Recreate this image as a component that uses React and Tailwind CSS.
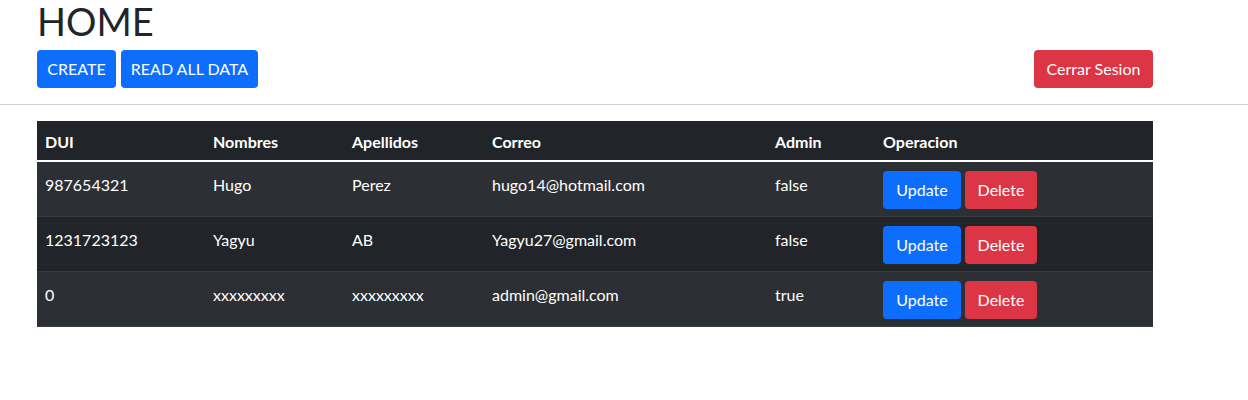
import React from "react";

const USERS = [
  { dui: "987654321", nombres: "Hugo", apellidos: "Perez", correo: "hugo14@hotmail.com", admin: "false" },
  { dui: "1231723123", nombres: "Yagyu", apellidos: "AB", correo: "Yagyu27@gmail.com", admin: "false" },
  { dui: "0", nombres: "xxxxxxxxx", apellidos: "xxxxxxxxx", correo: "admin@gmail.com", admin: "true" },
];

export default function App() {
  return (
    <div className="min-h-screen bg-white text-[#212529] font-['Lato','Noto_Sans',sans-serif] text-[16px]">
      <div className="pl-[37px] w-[1153px]">
        <h1 className="text-[38px] leading-[42px] font-normal h-[50px]">HOME</h1>
        <div className="flex items-center justify-between h-[38px]">
          <div className="flex gap-[5px]">
            <button className="h-[38px] w-[79px] rounded-[4px] bg-[#0d6efd] text-white">CREATE</button>
            <button className="h-[38px] w-[137px] rounded-[4px] bg-[#0d6efd] text-white">READ ALL DATA</button>
          </div>
          <button className="h-[38px] w-[119px] rounded-[4px] bg-[#dc3545] text-white">Cerrar Sesion</button>
        </div>
      </div>
      <hr className="mt-[16px] border-t border-[#cfcfcf]" />
      <div className="pl-[37px] pt-[16px]">
        <table className="w-[1116px] border-collapse text-white text-left">
          <thead>
            <tr className="bg-[#212529] h-[40px] border-b-2 border-white">
              <th className="w-[168px] px-2 pt-[3px] font-bold">DUI</th>
              <th className="w-[139px] px-2 pt-[3px] font-bold">Nombres</th>
              <th className="w-[140px] px-2 pt-[3px] font-bold">Apellidos</th>
              <th className="w-[283px] px-2 pt-[3px] font-bold">Correo</th>
              <th className="w-[108px] px-2 pt-[3px] font-bold">Admin</th>
              <th className="px-2 pt-[3px] font-bold">Operacion</th>
            </tr>
          </thead>
          <tbody>
            {USERS.map((u, i) => (
              <tr key={u.dui} className={`h-[54px] border-b border-[#373b3e] ${i % 2 === 0 ? "bg-[#2c3034]" : "bg-[#212529]"}`}>
                <td className="px-2 pt-[11px] align-top">{u.dui}</td>
                <td className="px-2 pt-[11px] align-top">{u.nombres}</td>
                <td className="px-2 pt-[11px] align-top">{u.apellidos}</td>
                <td className="px-2 pt-[11px] align-top">{u.correo}</td>
                <td className="px-2 pt-[11px] align-top">{u.admin}</td>
                <td className="px-2 pt-[9px] pb-[7px] align-top">
                  <div className="flex gap-[4px]">
                    <button className="h-[38px] w-[78px] rounded-[4px] bg-[#0d6efd] text-white">Update</button>
                    <button className="h-[38px] w-[72px] rounded-[4px] bg-[#dc3545] text-white">Delete</button>
                  </div>
                </td>
              </tr>
            ))}
          </tbody>
        </table>
      </div>
    </div>
  );
}
